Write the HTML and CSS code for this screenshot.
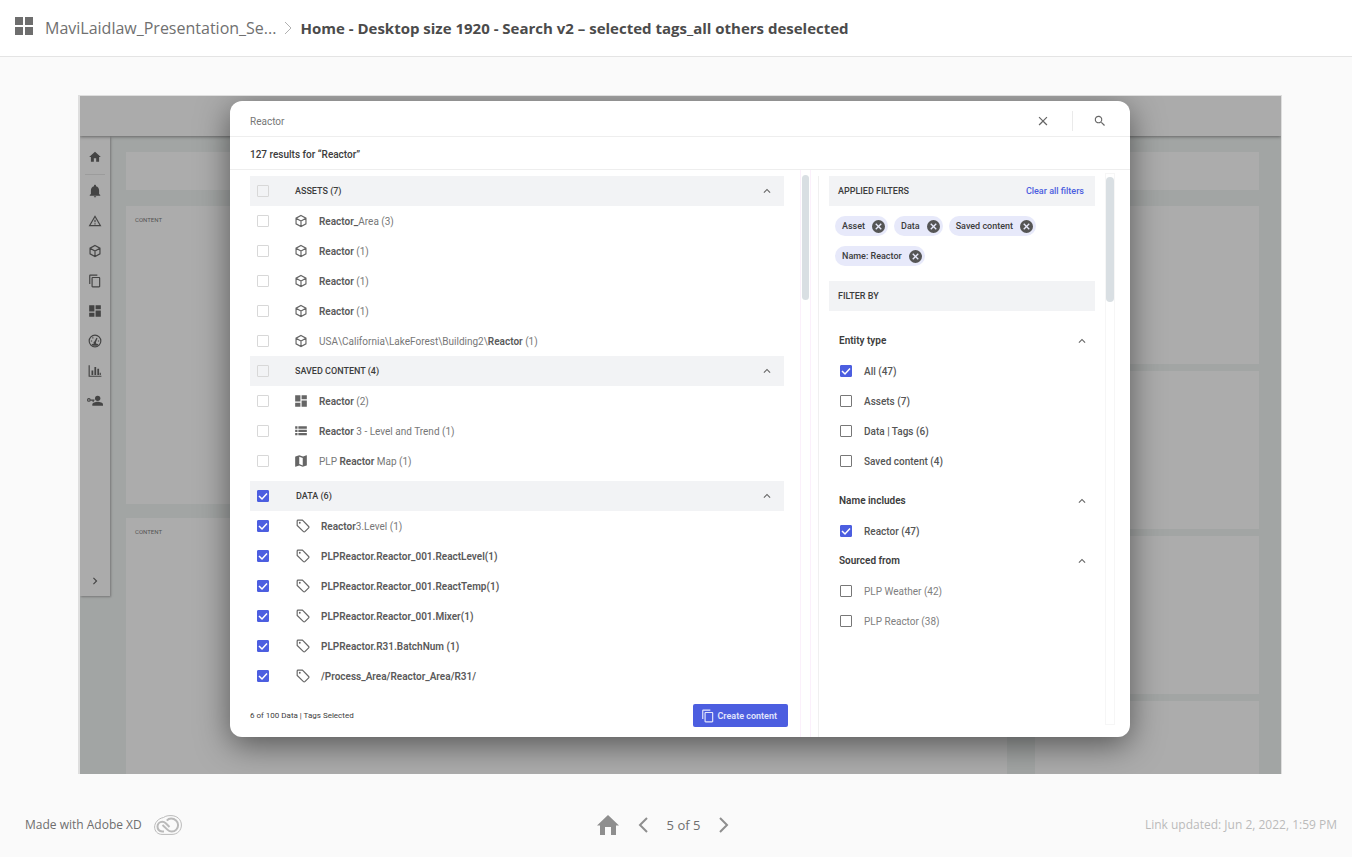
FILE: index.html
```html
<!DOCTYPE html>
<html lang="en">
<head>
<meta charset="utf-8">
<title>Home - Desktop size 1920 - Search v2</title>
<link rel="stylesheet" href="styles.css">
</head>
<body>
<svg class="sprite" aria-hidden="true">
  <symbol id="home" viewBox="0 0 24 24"><path d="M10 20v-6h4v6h5v-8h3L12 3 2 12h3v8z"/></symbol>
  <symbol id="bell" viewBox="0 0 24 24"><path d="M12 23c1.100 0 2-.9 2-2h-4c0 1.100.9 2 2 2zm7-6v-6c0-3.400-1.900-6.300-5.300-7V3c0-1-.7-1.700-1.700-1.700S10.300 2 10.300 3v1C6.900 4.700 5 7.600 5 11v6l-2 2v1h18v-1z"/></symbol>
  <symbol id="warn" viewBox="0 0 24 24"><path d="M12 6l7.500 13h-15L12 6m0-4L1 21h22L12 2zm1 14h-2v2h2v-2zm0-6h-2v4h2v-4z"/></symbol>
  <symbol id="cube" viewBox="0 0 24 24"><path class="line" d="M12 2.500l8.500 4.700v9.600L12 21.500l-8.500-4.700V7.200zM3.500 7.200L12 12l8.500-4.800M12 12v9.500"/></symbol>
  <symbol id="copy" viewBox="0 0 24 24"><path d="M16 1H4c-1.100 0-2 .9-2 2v14h2V3h12V1zm3 4H8c-1.100 0-2 .9-2 2v14c0 1.100.9 2 2 2h11c1.100 0 2-.9 2-2V7c0-1.100-.9-2-2-2zm0 16H8V7h11v14z"/></symbol>
  <symbol id="dash" viewBox="0 0 24 24"><path d="M2 13h9V2H2v11zm0 9h9v-7H2v7zm11 0h9V11h-9v11zm0-20v7h9V2h-9z"/></symbol>
  <symbol id="gauge" viewBox="0 0 24 24"><circle class="line" cx="12" cy="12" r="10"/><path d="M14.500 6.500l1.800.8-2.600 7a2.200 2.200 0 1 1-2.600-1.400zM5 11h2v2H5zM7 6.500l1.500-1.200 1.300 1.500-1.500 1.200zM17 11h2v2h-2zM6 18c3-2.500 9-2.500 12 0l-2 2H8z"/></symbol>
  <symbol id="bars" viewBox="0 0 24 24"><path d="M1 2h2v18h20v2H1zM6 11h3v8H6zM11 5h3v14h-3zM16 8h3v11h-3zM20 15h2v4h-2z"/></symbol>
  <symbol id="user" viewBox="0 0 30 24"><circle cx="20" cy="7" r="5"/><path d="M10 21v-2.500c0-3 6-5 10-5s10 2 10 5V21z"/><circle class="line" cx="3.500" cy="10" r="2.500"/><path d="M6 9h8v2.500h-1.500V14h-2v-2.500H6z"/></symbol>
  <symbol id="right" viewBox="0 0 24 24"><path d="M8.600 16.600L13.200 12 8.600 7.400 10 6l6 6-6 6z"/></symbol>
  <symbol id="up" viewBox="0 0 24 24"><path d="M7.400 15.400L12 10.800l4.600 4.600L18 14l-6-6-6 6z"/></symbol>
  <symbol id="close" viewBox="0 0 24 24"><path d="M19.500 6L18 4.500l-6 6-6-6L4.500 6l6 6-6 6L6 19.500l6-6 6 6 1.500-1.500-6-6z"/></symbol>
  <symbol id="search" viewBox="0 0 24 24"><path d="M15.500 14h-.8l-.3-.3A6.500 6.500 0 1 0 13.700 14.400l.3.300v.8l5 5 1.500-1.500zm-6 0a4.500 4.500 0 1 1 0-9 4.500 4.500 0 0 1 0 9z"/></symbol>
  <symbol id="list" viewBox="0 0 24 24"><path d="M2 4h4v4H2zM7.500 4H22v4H7.500zM2 9.700h4v4H2zM7.500 9.700H22v4H7.500zM2 15.400h4v4H2zM7.500 15.400H22v4H7.500z"/></symbol>
  <symbol id="map" viewBox="0 0 24 24"><path d="M21.500 2l-6 2.200L9 2 2.500 4.200C2.200 4.300 2 4.500 2 4.800v16.700c0 .4.200.5.500.5L9 19.800l6 2.200 6.500-2.200c.3-.1.500-.3.500-.6V2.500c0-.3-.2-.5-.5-.5zM15 19.500l-6-2.200V4.500l6 2.200z"/></symbol>
  <symbol id="tag" viewBox="0 0 24 24"><path class="line" d="M2 3.500v7.500l10.800 10.700c.7.700 1.700.7 2.400 0l6.500-6.500c.7-.7.7-1.700 0-2.400L11 2H3.500A1.500 1.500 0 0 0 2 3.500z"/><circle cx="6.500" cy="6.500" r="1.600"/></symbol>
  <symbol id="cancel" viewBox="0 0 24 24"><path d="M12 0a12 12 0 1 0 0 24 12 12 0 0 0 0-24zm6 16.200L16.200 18 12 13.800 7.800 18 6 16.200l4.200-4.200L6 7.800 7.800 6l4.200 4.200L16.200 6 18 7.800 13.800 12z"/></symbol>
</svg>

<header class="topbar">
  <button class="plain grid-button" aria-label="All screens"><svg viewBox="0 0 18 18" width="18" height="18"><path d="M0 0h8v8H0zM10 0h8v8h-8zM0 10h8v8H0zM10 10h8v8h-8z"/></svg></button>
  <a class="crumb" href="#">MaviLaidlaw_Presentation_Se...</a>
  <svg class="crumb-arrow" viewBox="0 0 8 14" width="8" height="14"><path d="M1 1l6 6-6 6"/></svg>
  <h1>Home - Desktop size 1920 - Search v2 – selected tags_all others deselected</h1>
</header>

<main class="artboard">
  <div class="app">
    <div class="app-bar"></div>
    <div class="app-body">
      <nav class="rail">
        <svg><use href="#home"/></svg>
        <hr>
        <svg><use href="#bell"/></svg>
        <svg><use href="#warn"/></svg>
        <svg><use href="#cube"/></svg>
        <svg><use href="#copy"/></svg>
        <svg><use href="#dash"/></svg>
        <svg><use href="#gauge"/></svg>
        <svg><use href="#bars"/></svg>
        <svg class="wide"><use href="#user"/></svg>
        <svg class="expand"><use href="#right"/></svg>
      </nav>
      <div class="board">
        <div class="card strip"></div>
        <div class="board-columns">
          <div class="board-main">
            <div class="card tall">CONTENT</div>
            <div class="card rest">CONTENT</div>
          </div>
          <div class="board-side">
            <div class="card mid"></div>
            <div class="card mid"></div>
            <div class="card mid"></div>
            <div class="card rest"></div>
          </div>
        </div>
      </div>
    </div>
  </div>

  <div class="overlay">
    <section class="modal" aria-label="Search">
      <div class="search-row">
        <input class="search-field" type="text" value="Reactor" aria-label="Search">
        <button class="plain" aria-label="Clear"><svg class="icon"><use href="#close"/></svg></button>
        <span class="split"></span>
        <button class="plain" aria-label="Search"><svg class="icon"><use href="#search"/></svg></button>
      </div>
      <p class="summary">127 results for “Reactor”</p>

      <div class="modal-body">
        <div class="results">
          <div class="group">
            <div class="band"><input type="checkbox" id="g1" class="faint"><label for="g1">ASSETS (7)</label><button class="plain" aria-label="Collapse"><svg class="icon"><use href="#up"/></svg></button></div>
            <div class="row"><input type="checkbox" id="a1" class="faint"><svg class="icon"><use href="#cube"/></svg><label for="a1"><b>Reactor_</b>Area (3)</label></div>
            <div class="row"><input type="checkbox" id="a2" class="faint"><svg class="icon"><use href="#cube"/></svg><label for="a2"><b>Reactor</b> (1)</label></div>
            <div class="row"><input type="checkbox" id="a3" class="faint"><svg class="icon"><use href="#cube"/></svg><label for="a3"><b>Reactor</b> (1)</label></div>
            <div class="row"><input type="checkbox" id="a4" class="faint"><svg class="icon"><use href="#cube"/></svg><label for="a4"><b>Reactor</b> (1)</label></div>
            <div class="row"><input type="checkbox" id="a5" class="faint"><svg class="icon"><use href="#cube"/></svg><label for="a5">USA\California\LakeForest\Building2\<b>Reactor</b> (1)</label></div>
          </div>
          <div class="group">
            <div class="band"><input type="checkbox" id="g2" class="faint"><label for="g2">SAVED CONTENT (4)</label><button class="plain" aria-label="Collapse"><svg class="icon"><use href="#up"/></svg></button></div>
            <div class="row"><input type="checkbox" id="s1" class="faint"><svg class="icon"><use href="#dash"/></svg><label for="s1"><b>Reactor</b> (2)</label></div>
            <div class="row"><input type="checkbox" id="s2" class="faint"><svg class="icon"><use href="#list"/></svg><label for="s2"><b>Reactor</b> 3 - Level and Trend (1)</label></div>
            <div class="row"><input type="checkbox" id="s3" class="faint"><svg class="icon"><use href="#map"/></svg><label for="s3">PLP <b>Reactor</b> Map (1)</label></div>
          </div>
          <div class="group data">
            <div class="band"><input type="checkbox" id="g3" checked><label for="g3">DATA (6)</label><button class="plain" aria-label="Collapse"><svg class="icon"><use href="#up"/></svg></button></div>
            <div class="row"><input type="checkbox" id="d1" checked><svg class="icon"><use href="#tag"/></svg><label for="d1"><b>Reactor</b>3.Level (1)</label></div>
            <div class="row"><input type="checkbox" id="d2" checked><svg class="icon"><use href="#tag"/></svg><label for="d2"><b>PLPReactor.Reactor_001.ReactLevel(1)</b></label></div>
            <div class="row"><input type="checkbox" id="d3" checked><svg class="icon"><use href="#tag"/></svg><label for="d3"><b>PLPReactor.Reactor_001.ReactTemp(1)</b></label></div>
            <div class="row"><input type="checkbox" id="d4" checked><svg class="icon"><use href="#tag"/></svg><label for="d4"><b>PLPReactor.Reactor_001.Mixer(1)</b></label></div>
            <div class="row"><input type="checkbox" id="d5" checked><svg class="icon"><use href="#tag"/></svg><label for="d5"><b>PLPReactor.R31.BatchNum (1)</b></label></div>
            <div class="row"><input type="checkbox" id="d6" checked><svg class="icon"><use href="#tag"/></svg><label for="d6"><b>/Process_Area/Reactor_Area/R31/</b></label></div>
          </div>
          <div class="actions">
            <span>6 of 100 Data | Tags Selected</span>
            <button class="create"><svg class="icon"><use href="#copy"/></svg>Create content</button>
          </div>
        </div>
        <div class="track pink"><div class="thumb"></div></div>

        <aside class="filters">
          <div class="band"><h2>APPLIED FILTERS</h2><a href="#">Clear all filters</a></div>
          <div class="chips">
            <span class="chip">Asset<button class="plain" aria-label="Remove Asset"><svg><use href="#cancel"/></svg></button></span>
            <span class="chip">Data<button class="plain" aria-label="Remove Data"><svg><use href="#cancel"/></svg></button></span>
            <span class="chip">Saved content<button class="plain" aria-label="Remove Saved content"><svg><use href="#cancel"/></svg></button></span>
            <span class="chip">Name: Reactor<button class="plain" aria-label="Remove Name"><svg><use href="#cancel"/></svg></button></span>
          </div>
          <div class="band"><h2>FILTER BY</h2></div>
          <div class="facet first">
            <div class="facet-head"><h3>Entity type</h3><button class="plain" aria-label="Collapse"><svg class="icon"><use href="#up"/></svg></button></div>
            <div class="option"><input type="checkbox" id="f1" checked><label for="f1">All (47)</label></div>
            <div class="option"><input type="checkbox" id="f2"><label for="f2">Assets (7)</label></div>
            <div class="option"><input type="checkbox" id="f3"><label for="f3">Data | Tags (6)</label></div>
            <div class="option"><input type="checkbox" id="f4"><label for="f4">Saved content (4)</label></div>
          </div>
          <div class="facet name">
            <div class="facet-head"><h3>Name includes</h3><button class="plain" aria-label="Collapse"><svg class="icon"><use href="#up"/></svg></button></div>
            <div class="option"><input type="checkbox" id="f5" checked><label for="f5">Reactor (47)</label></div>
          </div>
          <div class="facet light">
            <div class="facet-head"><h3>Sourced from</h3><button class="plain" aria-label="Collapse"><svg class="icon"><use href="#up"/></svg></button></div>
            <div class="option"><input type="checkbox" id="f6"><label for="f6">PLP Weather (42)</label></div>
            <div class="option"><input type="checkbox" id="f7"><label for="f7">PLP Reactor (38)</label></div>
          </div>
        </aside>
        <div class="track outer"><div class="thumb"></div></div>
      </div>
    </section>
  </div>
</main>

<footer class="footer">
  <div class="made">Made with Adobe XD
    <svg viewBox="0 0 28 20" width="28" height="20"><path d="M9.500 2.500C12 .8 14 .6 17 .6c6 0 10.400 4 10.400 9.400s-4 9.400-9.400 9.400H8C3.500 19.400.6 16 .6 12S4 3.500 9.500 2.500z"/><path class="thick" d="M10 16.500H8.200C5.300 16.300 3.500 14.300 3.500 11.600S5.600 6.800 8.300 6.800c1.600 0 2.700.7 3.700 1.700l3.500 3.500M12.800 5.600c1-1.200 2.500-2 4.300-2 3.900 0 7 2.700 7 6.400s-2.700 6.500-6.300 6.500c-1.900 0-3.200-.7-4.400-1.900L8.500 10"/></svg>
  </div>
  <nav class="pager">
    <button class="plain" aria-label="First screen"><svg viewBox="0 0 22 20" width="22" height="20"><path class="solid" d="M11 0l11 10.500h-3V20h-5v-8H8v8H3v-9.500H0z"/></svg></button>
    <button class="plain" aria-label="Previous"><svg viewBox="0 0 10 16" width="10" height="16"><path d="M9 1L2 8l7 7"/></svg></button>
    <span>5 of 5</span>
    <button class="plain" aria-label="Next"><svg viewBox="0 0 10 16" width="10" height="16"><path d="M1 1l7 7-7 7"/></svg></button>
  </nav>
  <div class="updated">Link updated: Jun 2, 2022, 1:59 PM</div>
</footer>
</body>
</html>
```
FILE: styles.css
```css
* { box-sizing: border-box; }
body {
  margin: 0;
  min-height: 100vh;
  display: flex;
  flex-direction: column;
  background: #fafafa;
  font-family: "Open Sans", sans-serif;
}
h1, h2, h3, p { margin: 0; font: inherit; }
svg { display: block; fill: currentColor; flex: none; }
.sprite { display: none; }
.line { fill: none; stroke: currentColor; stroke-width: 2; }
.plain {
  display: flex;
  padding: 0;
  border: 0;
  background: none;
  color: inherit;
}
.icon { width: 14px; height: 14px; }

/* Viewer header */
.topbar {
  display: flex;
  align-items: center;
  height: 57px;
  padding: 0 15px;
  border-bottom: 1px solid #e4e4e4;
  background: #fff;
  font-size: 16px;
  white-space: nowrap;
}
.grid-button { margin: 0 12px 4px 0; color: #6e6e6e; }
.crumb { color: #707070; text-decoration: none; }
.crumb-arrow { margin: 0 8px; fill: none; stroke: #b0b0b0; }
.topbar h1 { color: #4b4b4b; font-size: 15px; font-weight: 700; }

/* Prototype screen */
.artboard {
  position: relative;
  flex: 1;
  display: flex;
  margin: 38px 70px 0 78px;
  border: solid #dedede;
  border-width: 1px 1px 0 2px;
  font-family: Roboto, sans-serif;
}
.app {
  flex: 1;
  display: flex;
  flex-direction: column;
  overflow: hidden;
  background: #a2a5a4;
}
.app-bar {
  height: 40px;
  background: #ababab;
  box-shadow: 0 1px 3px #666;
  z-index: 1;
}
.app-body { flex: 1; display: flex; }
.rail {
  display: flex;
  flex-direction: column;
  align-items: center;
  align-self: flex-start;
  width: 30px;
  height: 460px;
  padding-top: 6px;
  background: #ababab;
  box-shadow: 1px 1px 2px #777;
  color: #444;
}
.rail svg { width: 14px; height: 14px; margin: 8px 0; }
.rail .wide { width: 16px; }
.rail .expand { margin-top: auto; }
.rail hr { width: 20px; height: 1px; margin: 2px 0 1px; border: 0; background: #9c9c9c; }
.board {
  flex: 1;
  display: flex;
  flex-direction: column;
  gap: 16px;
  padding: 16px 22px 0 16px;
}
.card {
  padding: 10px 9px;
  background: #acacac;
  color: #555;
  font-size: 6px;
  line-height: 7px;
}
.strip { height: 38px; }
.board-columns { flex: 1; display: flex; gap: 28px; }
.board-main { flex: 1; display: flex; flex-direction: column; gap: 14px; }
.board-side { width: 224px; display: flex; flex-direction: column; gap: 7px; }
.tall { height: 298px; }
.mid { height: 158px; }
.rest { flex: 1; }

/* Search dialog */
.overlay {
  position: absolute;
  inset: 0;
  z-index: 2;
  display: flex;
  padding: 5px 151px 37px 150px;
  overflow: hidden;
}
.modal {
  flex: 1;
  display: flex;
  flex-direction: column;
  border-radius: 12px;
  background: #fff;
  box-shadow: 0 8px 32px rgba(0, 0, 0, .5);
  color: #3c3c3c;
  font-size: 10px;
  line-height: 14px;
}
.modal .plain { color: #666; }
.search-row {
  display: flex;
  align-items: center;
  height: 36px;
  padding: 4px 23px 0 20px;
  border-bottom: 1px solid #eee;
}
.search-field {
  flex: 1;
  padding: 2px 0 0;
  border: 0;
  outline: 0;
  background: none;
  color: #777;
  font: 10px/14px Roboto, sans-serif;
}
.split { width: 1px; height: 20px; margin: 0 20px 0 22px; background: #eaeaea; }
.summary {
  padding: 11px 20px 7px;
  border-bottom: 1px solid #eee;
  font-weight: 500;
}
.modal-body { flex: 1; display: flex; }
.results {
  flex: 1;
  display: flex;
  flex-direction: column;
  padding: 6px 12px 10px 20px;
}
.group { padding-right: 4px; }
.band {
  display: flex;
  align-items: center;
  height: 30px;
  background: #f2f3f5;
  font-size: 9px;
  font-weight: 500;
}
.results .band { padding: 0 10px 0 7px; }
.band label { flex: 1; margin-left: 26px; }
.row {
  display: flex;
  align-items: center;
  height: 30px;
  padding-left: 7px;
  color: #777;
}
.row label, .option label { padding-top: 1px; }
.row .icon { margin: 0 11px 0 25px; color: #666; }
.row b { color: #5a5a5a; font-weight: 600; }
.data { padding-top: 5px; }
.data .band label { margin-left: 27px; }
.data .row .icon { margin-left: 27px; }
.actions {
  display: flex;
  align-items: center;
  justify-content: space-between;
  margin-top: auto;
  font-size: 8px;
}
.create {
  display: flex;
  align-items: center;
  gap: 2px;
  height: 23px;
  padding: 0 11px 0 8px;
  border: 0;
  border-radius: 2px;
  background: #4c5ee0;
  color: #e3e6fc;
  font: 600 9px/12px Roboto, sans-serif;
}

input[type="checkbox"] {
  appearance: none;
  flex: none;
  width: 12px;
  height: 12px;
  margin: 0;
  border: 1px solid #777;
  border-radius: 1px;
}
input[type="checkbox"].faint { border-color: #d8d8d8; }
input[type="checkbox"]:checked {
  border-color: #4c5ee0;
  background: #4c5ee0 url("data:image/svg+xml,%3Csvg xmlns='http://www.w3.org/2000/svg' viewBox='0 0 10 10'%3E%3Cpath d='M1 5l3 3 5-5.500' fill='none' stroke='white' stroke-width='1.500'/%3E%3C/svg%3E") center / 10px 10px no-repeat;
}

.track {
  width: 11px;
  padding: 5px 1px;
  border: solid #f7f4f7;
  border-width: 0 1px;
}
.pink { border-color: #fbf0fb; }
.thumb { height: 125px; border-radius: 4px; background: #d9dfe3; }
.outer { width: 10px; margin: 3px 15px 12px 10px; border-width: 1px; padding: 3px 0; border-color: #f6f6f6; }

/* Filters */
.filters {
  width: 277px;
  margin: 6px 0 0 7px;
  padding-left: 10px;
  border-left: 1px solid #f0f0f0;
}
.filters .band { justify-content: space-between; padding: 0 11px 0 9px; }
.band a { color: #4c5ee0; text-decoration: none; }
.chips {
  display: flex;
  flex-wrap: wrap;
  gap: 10px 6px;
  padding: 10px 6px 15px;
}
.chip {
  display: flex;
  align-items: center;
  gap: 7px;
  height: 20px;
  padding: 0 3px 0 7px;
  border-radius: 10px;
  background: #e7e9fa;
  font-size: 9px;
  font-weight: 500;
}
.chip svg { width: 13px; height: 13px; color: #555; }
.facet { padding: 0 6px 0 10px; }
.first { padding-top: 15px; }
.name { padding-top: 10px; }
.facet-head { display: flex; align-items: center; justify-content: space-between; height: 30px; font-weight: 600; }
.option { display: flex; align-items: center; gap: 12px; height: 30px; padding-left: 1px; font-weight: 500; color: #555; }
.light .option { color: #808080; font-weight: 400; }

/* Viewer footer */
.footer {
  display: grid;
  grid-template-columns: 1fr auto 1fr;
  align-items: center;
  height: 83px;
  padding: 18px 15px 0 25px;
  color: #6e6e6e;
  font-size: 12px;
}
.made { display: flex; align-items: center; gap: 12px; }
.made svg { fill: none; stroke: #bababa; }
.made .thick { stroke-width: 2; }
.pager { display: flex; align-items: center; gap: 19px; margin-right: 36px; color: #8e8e8e; }
.pager svg { fill: none; stroke: currentColor; stroke-width: 2; }
.pager .solid { fill: currentColor; stroke: none; }
.pager span { color: #6e6e6e; font-size: 13px; }
.updated { justify-self: end; color: #bababa; }
```
